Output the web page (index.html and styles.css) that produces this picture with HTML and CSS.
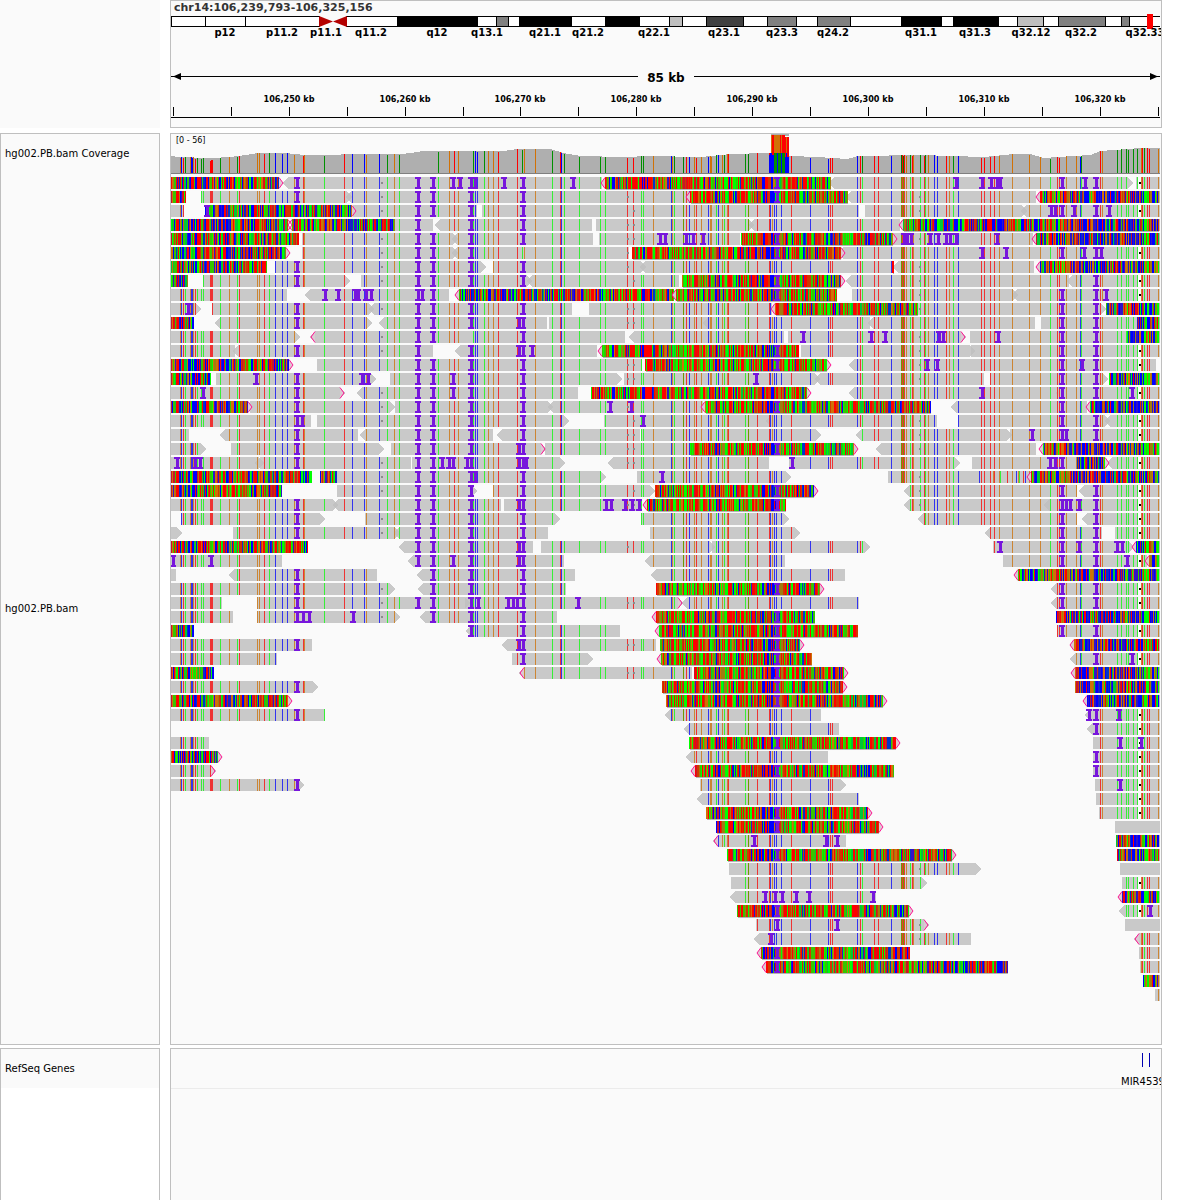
FILE: index.html
```html
<!DOCTYPE html>
<html lang="en">
<head>
<meta charset="utf-8">
<meta name="viewport" content="width=device-width, initial-scale=1">
<title>chr14:106,239,793-106,325,156</title>
<link rel="stylesheet" href="styles.css">
</head>
<body>
<main class="browser">
  <section class="row row-header">
    <div class="names names-blank"></div>
    <div class="panel panel-header">
      <h1 class="locus">chr14:106,239,793-106,325,156</h1>
      <svg id="ideogram" class="ideogram" role="img" aria-label="Chromosome 14 bands"></svg>
      <svg id="ruler" class="ruler" role="img" aria-label="Ruler, 85 kb"></svg>
    </div>
  </section>
  <section class="row row-alignments">
    <div class="names">
      <div class="name name-coverage">hg002.PB.bam Coverage</div>
      <div class="name name-reads">hg002.PB.bam</div>
    </div>
    <div class="panel">
      <div class="coverage">
        <span class="range">[0 - 56]</span>
        <svg id="coverage" class="track" viewBox="171 134 990 40" preserveAspectRatio="none" shape-rendering="crispEdges"></svg>
      </div>
      <svg id="reads" class="track reads" viewBox="171 174 990 870" preserveAspectRatio="none" shape-rendering="crispEdges"></svg>
    </div>
  </section>
  <section class="row row-genes">
    <div class="names names-genes">
      <div class="name name-genes">RefSeq Genes</div>
    </div>
    <div class="panel">
      <svg id="genes" class="genes" role="img" aria-label="RefSeq genes"></svg>
    </div>
  </section>
</main>
<script src="tracks.js"></script>
</body>
</html>
```
FILE: styles.css
```css
* { box-sizing: border-box; }

body {
  margin: 0;
  background: #fff;
  color: #000;
  font-family: "DejaVu Sans", sans-serif;
  font-size: 10px;
  line-height: 12px;
}

.browser {
  display: flex;
  flex-direction: column;
  min-height: 100vh;
  padding-right: 18px;
}

.row {
  display: grid;
  grid-template-columns: 160px minmax(0, 1fr);
  column-gap: 10px;
}
.row-header { margin-bottom: 5px; }
.row-alignments { margin-bottom: 3px; }
.row-genes { flex: 1; }

.names {
  display: flex;
  flex-direction: column;
  border: 1px solid #bfbfbf;
  background: #fafafa;
}
.names-blank { border: 0; }
.names-genes { background: #fff; border-bottom: 0; }

.name {
  display: flex;
  align-items: center;
  padding-left: 4px;
}
.name-coverage { height: 40px; }
.name-reads { flex: 1; }
.name-genes { height: 39px; background: #fafafa; }

.panel {
  min-width: 0;
  overflow: hidden;
  border: 1px solid #bfbfbf;
  background: #fafafa;
}
.row-genes .panel { border-bottom: 0; }

.locus {
  height: 13px;
  margin: 0;
  padding-left: 3px;
  color: #333;
  font-size: 11px;
  font-weight: bold;
  line-height: 14px;
}

.ideogram, .ruler, .genes, .track { display: block; width: 100%; }
.ideogram { height: 46px; }
.ruler { height: 67px; }
.genes { height: 60px; }
.reads { height: 870px; }

.coverage { position: relative; height: 40px; }
.coverage .track { height: 40px; }
.range {
  position: absolute;
  top: 1px;
  left: 5px;
  font-size: 8px;
}

.band-label { font-size: 10px; font-weight: bold; text-anchor: middle; }
.span-label { font-size: 12px; font-weight: bold; text-anchor: middle; }
.tick-label {
  font-family: "DejaVu Sans Condensed", "DejaVu Sans", sans-serif;
  font-size: 9px;
  font-weight: bold;
  text-anchor: middle;
}
.gene-label { font-size: 10px; }
```
FILE: tracks.js
```js
var X0 = 171, W = 990;
function el(id) { return document.getElementById(id); }
function pct(x) { return ((x - X0) / W * 100) + '%'; }
function wpct(w) { return (w / W * 100) + '%'; }
function rect(x, y, w, h, c) {
  return '<rect x="' + pct(x) + '" y="' + y + '" width="' + wpct(w) + '" height="' + h +
    '" fill="' + c + '" shape-rendering="crispEdges"/>';
}
function label(x, y, cls, t) {
  return '<text class="' + cls + '" x="' + pct(x) + '" y="' + y + '">' + t + '</text>';
}
/* A small drawing that keeps its shape, hung on a percentage position. */
function glyph(x, d, c) {
  return '<svg x="' + pct(x) + '" y="0" overflow="visible"><path d="' + d + '" fill="' + c + '"/></svg>';
}

/* Chromosome bands: start, end, fill */
(function () {
  var y = 2, s = '';
  s += rect(171, y, 149, 11, '#000') + rect(346, y, 814, 11, '#000');
  s += rect(172, y + 1, 33, 9, '#fff') + rect(206, y + 1, 39, 9, '#fff') + rect(246, y + 1, 73, 9, '#fff');
  s += rect(347, y + 1, 813, 9, '#fff');
  [[397, 478, '#000'], [496, 509, '#808080'], [519, 572, '#000'], [605, 640, '#000'], [669, 683, '#bfbfbf'],
   [706, 744, '#404040'], [767, 797, '#808080'], [817, 851, '#808080'], [901, 942, '#000'], [953, 999, '#000'],
   [1017, 1044, '#bfbfbf'], [1058, 1106, '#808080'], [1121, 1130, '#808080']].forEach(function (b) {
    s += rect(b[0], y, b[1] - b[0], 11, '#000') + rect(b[0] + 1, y + 1, b[1] - b[0] - 2, 9, b[2]);
  });
  s += glyph(319, 'M0 2L14 7.5L0 13Z', '#b40000') + glyph(333, 'M0 7.5L14 2V13Z', '#b40000');
  s += rect(1147, 0, 6, 15, '#f00');
  [[225, 'p12'], [282, 'p11.2'], [326, 'p11.1'], [371, 'q11.2'], [437, 'q12'], [487, 'q13.1'], [545, 'q21.1'],
   [588, 'q21.2'], [654, 'q22.1'], [724, 'q23.1'], [782, 'q23.3'], [833, 'q24.2'], [921, 'q31.1'], [975, 'q31.3'],
   [1031, 'q32.12'], [1081, 'q32.2'], [1145, 'q32.33']].forEach(function (l) {
    s += label(l[0], 22, 'band-label', l[1]);
  });
  el('ideogram').innerHTML = s;
})();

/* Ruler */
(function () {
  var s = rect(171, 16, 467, 1, '#000') + rect(694, 16, 466, 1, '#000');
  s += glyph(173, 'M0 16.5L8 13V20Z', '#000') + glyph(1150, 'M8 16.5L0 13V20Z', '#000');
  s += label(666, 22, 'span-label', '85 kb');
  [173, 231, 289, 347, 405, 463, 520, 578, 636, 694, 752, 810, 868, 926, 984, 1042, 1100, 1158].forEach(function (x) {
    s += rect(x, 47, 1, 9, '#000');
  });
  for (var i = 0; i < 8; i++) {
    s += label([289, 405, 520, 636, 752, 868, 984, 1100][i], 42, 'tick-label', '106,' + (250 + i * 10) + ' kb');
  }
  s += rect(171, 57, 989, 1, '#000');
  el('ruler').innerHTML = s;
})();

/* Mismatch columns shared by the reads */
var SNP = {
  o: [180, 190, 193, 229, 257, 259, 294, 304, 366, 394, 449, 458, 488, 493, 524, 535, 653, 672, 694, 701, 710, 711, 722,
      727, 772, 906, 913, 928, 949, 999, 1012, 1029, 1040, 1066, 1076, 1102, 1141, 1158],
  b: [181, 191, 192, 275, 282, 287, 352, 364, 379, 475, 477, 561, 671, 689, 708, 718, 770, 774, 776, 781, 810, 828,
      857, 891, 934, 937, 958, 1080],
  r: [183, 195, 210, 211, 212, 239, 264, 303, 344, 454, 498, 517, 560, 627, 633, 686, 696, 728, 757, 769, 791, 830, 832,
      860, 874, 878, 902, 904, 912, 924, 946, 981, 984, 990, 994, 1057, 1059, 1100, 1142, 1147, 1149],
  g: [185, 197, 201, 203, 220, 237, 269, 324, 387, 399, 438, 473, 484, 522, 552, 564, 579, 600, 605, 641, 643, 674, 716,
      724, 745, 862, 910, 920, 925, 953, 1050, 1081, 1117, 1121, 1126, 1128, 1133, 1137, 1144],
  d: [683, 748, 901, 903]
};
var READ_COLOR = { o: '#cc8533', b: '#3333ef', r: '#ee3333', g: '#37ef37', d: '#6f9a00' };
var COV_COLOR = { o: '#d17105', b: '#0000ff', r: '#ff0000', g: '#009000', d: '#008000' };

var seed = 7;
function rnd() {
  seed = (seed * 1103515245 + 12345) % 2147483648;
  return ((seed >> 8) % 10007) / 10007;
}
function P(x, y, w, h) { return 'M' + x + ' ' + y + 'h' + w + 'v' + h + 'h-' + w + 'z'; }
function Layer() { this.m = {}; }
Layer.prototype.add = function (c, d) { this.m[c] = (this.m[c] || '') + d; };
Layer.prototype.svg = function () {
  var s = '';
  for (var c in this.m) { s += '<path fill="' + c + '" d="' + this.m[c] + '"/>'; }
  return s;
};

/* Coverage */
(function () {
  var prof = [[171, 156], [178, 157], [210, 158], [230, 157], [245, 155], [257, 153], [285, 153], [305, 155], [375, 154],
    [400, 154], [410, 153], [423, 151], [503, 151], [517, 149], [550, 149], [563, 153], [580, 156], [623, 157],
    [650, 156], [700, 157], [730, 154], [767, 153], [790, 156], [817, 157], [847, 159], [857, 156], [920, 155],
    [983, 157], [1013, 154], [1030, 154], [1043, 158], [1057, 157], [1090, 155], [1100, 151], [1127, 149], [1140, 148], [1160, 148]];
  function top(x) {
    for (var i = 1; i < prof.length; i++) {
      if (x <= prof[i][0]) {
        var a = prof[i - 1], b = prof[i];
        return Math.round(a[1] + (b[1] - a[1]) * (x - a[0]) / (b[0] - a[0]));
      }
    }
    return 148;
  }
  var L = new Layer(), x, y;
  for (x = 171; x < 1160; x++) {
    y = top(x);
    L.add('#afafaf', P(x, y, 1, 173 - y));
  }
  for (var k in SNP) {
    SNP[k].forEach(function (p) {
      var t = top(p) + (p > 209 && p < 213 ? 2 : 0) + (p % 3 === 0 ? 1 : 0);
      L.add(COV_COLOR[k], P(p, t, 1, 173 - t));
    });
  }
  for (x = 771; x < 789; x++) {
    L.add('#afafaf', P(x, 134, 1, 2));
    L.add(x % 5 === 1 || (x > 773 && x < 780) ? '#d17106' : '#ff0001', P(x, x > 784 ? 137 : 135, 1, 20));
    L.add(x < 773 || x % 4 === 1 || x > 785 ? '#0001ff' : '#009001', P(x, 153, 1, 20));
  }
  L.add('#0001ff', P(769, 155, 2, 18));
  L.add('#7f7f7f', P(171, 173, 989, 1));
  el('coverage').innerHTML = L.svg();
})();

/* Reads. g: aligned, b: aligned without mismatches, m: mismatched bases.
   < and > mark strand ends, { and } mark clipped ends.
   Second and third fields: extra and missing insertions. */
var ROWS = [
  ['m171-279> g<283-602 m<605-831 g<829-1133> g1136-1160', [453, 460, 475, 504, 573, 956, 982, 991, 997, 1000, 1085]],
  ['m171-186 g201-352> g<346-690 m<690-848 g<846-1036 m<1040-1160', [], [1062, 1096]],
  ['g171-184 m205-352> g<348-477 g482-718 g<710-859 g865-1027> g<1021-1160', [207, 1051, 1055, 1074, 1109]],
  ['m171-288> m<292-395 g395-433 g<435-592 g596-754> g<749-900 m<903-1160', []],
  ['m171-299 g302-458> g<452-593 g599-740 m741-893> g893-1033 m<1036-1160', [660, 665, 686, 693, 703, 904, 907, 911, 930, 938, 946, 950, 956, 997]],
  ['m171-286> g302-458> g<452-629 m632-841> g<838-1160', [982, 1006, 1084, 1101], [523]],
  ['m171-267 g275-486> g493-646> g<640-892 m892-894 g<893-1034 m<1040-1160', []],
  ['m171-188 g203-350> g361-532> g<527-679 m682-841> g<846-1069 g<1067-1160', [], [1062]],
  ['g171-287 g<305-449 m<459-674 m<676-837 g852-1018> g<1012-1160', [325, 338, 355, 358, 366, 371, 422, 1106], [471]],
  ['g171-201> g212-374> g<369-572 g589-772 m<775-918 g918-1106> m1106-1160', [188]],
  ['m171-194 g<215-372> g<379-547 g549-710 g<703-870 g<868-1035 g1041-1137 m1137-1160', [519]],
  ['g171-300> g{310-625 g<629-784 g788-966} g970-1127 m1127-1160', [803, 871, 885, 939, 943, 998], [297, 471]],
  ['g171-235 g<233-433 g<455-597 m<602-799 g801-975> g971-1160', [519, 532], [433]],
  ['m171-289> g317-642 m645-827> g<849-1156', [927, 937, 1082]],
  ['m171-211 g216-376> g390-622> g624-820> g<815-984 g990-1108> m1109-1160', [256, 362, 368, 453, 756]],
  ['g171-345} g<357-578 m591-807> g<849-1060 g<1056-1160', [203, 453, 982, 1132]],
  ['m171-248> g250-395> g395-553> g<548-703 m<705-931 g<951-1087 m<1090-1160', [610, 631]],
  ['g171-311 g317-569> g604-775 g<766-937 g958-1110> g<1105-1160', [302, 643]],
  ['g171-189 g<220-358 g<360-493 g<497-640 g641-821> g<856-1012> g1010-1160', [1032, 1066]],
  ['g171-206> g231-384> g391-546} g545-690 m690-854> g<876-1036 m<1043-1160', [519]],
  ['g171-264> g<255-411 g412-565> g<608-769 g789-960> g972-1077 m1077-1105> g<1107-1160', [177, 195, 200, 442, 449, 453, 467, 519, 526, 792, 1050, 1055]],
  ['m171-312 m320-337 g337-606> g637-791> g888-1030 m<1031-1160', [662, 475]],
  ['m171-282 g337-477> g493-655> m655-814> g<904-1077 g<1079-1160', []],
  ['g171-338> g<333-501 g504-642 m<647-786 g<904-1050 g<1044-1160', [519, 606, 611, 625, 632, 639, 1066, 1070, 1079]],
  ['g181-325> g365-560> g641-789> g<918-1077 g<1082-1160', []],
  ['g171-182> g233-400> g<394-548 g650-800> g<985-1102 g1115-1160', []],
  ['m171-308 g<399-533 g541-715> g712-870> g993-1134> m<1136-1160', [519, 1000, 1079, 1117, 1122]],
  ['g171-282 g<408-564 g<645-785 g1003-1147 m<1149-1160', [173, 211, 453, 519, 1127]],
  ['g171-176 g<229-377 g<417-575 g<651-845 m<1018-1160', [], [418]],
  ['g171-395> g<418-566 m656-820> g<1051-1160', [], [418]],
  ['g171-222 g257-470> g465-683} g<682-859 g<1051-1160', [478, 508, 513, 517, 578]],
  ['g171-233 g257-400> g<420-557 m<656-815 m1056-1160', [303, 309, 353], [418]],
  ['m171-194 g<466-620 m<659-858 g1057-1160', []],
  ['g171-312 g<502-656 m660-800> m<1074-1160', [519]],
  ['g171-277 g512-593> m<661-812 g<1070-1160', [1132]],
  ['m171-214 g{519-692 m694-844> m<1075-1160', [], [523]],
  ['g171-318> m662-843> m1075-1160', []],
  ['m171-288> m666-883> m<1087-1160', []],
  ['g171-325 g<665-821 g<1085-1160', [1089, 1119]],
  ['g<684-839 g<1087-1160', []],
  ['g171-209 m689-896> g1093-1160', [1120, 1141], [1096]],
  ['m171-218> g<686-828 g1093-1160', []],
  ['g171-216} m<695-894 g1093-1160', []],
  ['g171-304> g700-846> g1095-1160', [1120], [1096]],
  ['g<697-859 g1096-1160', [], [1096]],
  ['m706-868> g1099-1160', []],
  ['m716-879> b1115-1160', []],
  ['g{713-846 m1116-1160', [754, 826, 837]],
  ['m727-952> m1117-1160', []],
  ['g729-981> b1120-1160', []],
  ['g731-927> g1122-1160', []],
  ['g<730-876 m<1122-1160', [765, 775, 782, 796, 809, 873]],
  ['m737-909> g<1119-1160', [1150]],
  ['g756-929} b1125-1160', [777, 837]],
  ['g<754-971 g{1134-1160', [771]],
  ['m<761-910 g1139-1160', []],
  ['m<766-1008 g1140-1160', []],
  ['m1143-1160', []],
  ['g1155-1160', []]
];
var INS = [297, 418, 433, 471, 523, 1062, 1096];
var DOTS = [382, 628, 634, 920];

/* Base colours and the blends of neighbouring bases */
var BASE = ['#ff0000', '#00ff00', '#0000ff', '#d17105', '#d13800', '#37c400', '#3214c8', '#a07c10', '#c8142d', '#00c837', '#0037c8', '#e01800'];
function pick(x) {
  var r = rnd(), w;
  if (x > 765 && x < 773) { w = [0, 0, 0.6, 0, 0.1, 0.1, 0.1, 0, 0.1, 0, 0, 0]; }
  else if (x > 600 && x < 910) { w = [0.2, 0.17, 0.06, 0.06, 0.13, 0.13, 0.03, 0.08, 0.03, 0.05, 0.03, 0.03]; }
  else if (x > 1000) { w = [0.12, 0.08, 0.18, 0.15, 0.08, 0.06, 0.12, 0.07, 0.05, 0.04, 0.03, 0.02]; }
  else { w = [0.16, 0.12, 0.14, 0.07, 0.08, 0.08, 0.11, 0.06, 0.06, 0.06, 0.04, 0.02]; }
  for (var i = 0; i < w.length; i++) { r -= w[i]; if (r < 0) { return BASE[i]; } }
  return BASE[0];
}
(function () {
  var col = {}, x;
  for (x = 171; x < 1160; x++) { col[x] = rnd() < 0.3 && col[x - 1] ? col[x - 1] : pick(x); }
  var grey = '', snp = new Layer(), bases = new Layer(), ins = '', dots = '', pink = '', gap = '', bar = '';
  function mark(c, y) {
    ins += P(c - 3, y, 6, 2) + P(c - 1, y + 2, 3, 8) + P(c - 3, y + 10, 6, 2);
  }
  function pinkRight(e, y) { pink += 'M' + e + ' ' + (y + 0.5) + 'l4 5.5l-4 5.5'; }
  function pinkLeft(a, y) { pink += 'M' + a + ' ' + (y + 0.5) + 'l-4 5.5l4 5.5'; }
  ROWS.forEach(function (row, i) {
    var y = 177 + 14 * i, greys = [];
    row[0].split(' ').forEach(function (tok) {
      var q = /^([gbm])([<{]?)(\d+)-(\d+)([>}]?)$/.exec(tok);
      var kind = q[1], a = +q[3], e = +q[4], l = q[2], r = q[5];
      if (kind === 'm') {
        if (e === 1160) { e = 1159; bar += P(1159, y, 1, 12); }
        for (var x = a; x < e; x++) {
          bases.add(rnd() < 0.55 ? col[x] : pick(x), P(x, y, 1, 12));
        }
        if (l) { pinkLeft(a, y); }
        if (r) { pinkRight(e, y); }
        if (a > 600 && a < 950) {
          bar += P(a + 1, y + 12, e - a - 1, 1);
          if (a < 770 && e > 785) { mark(777, y); }
        }
        return;
      }
      grey += '<path d="M' + (l ? a + 5 : a) + ' ' + y + (l ? 'L' + a + ' ' + (y + 6) + 'L' + (a + 5) + ' ' + (y + 12) : 'V' + (y + 12)) +
        'H' + (r ? e - 5 : e) + (r ? 'L' + e + ' ' + (y + 6) + 'L' + (e - 5) + ' ' + y : 'V' + y) + 'Z"/>';
      if (l === '{') { pinkLeft(a + 5, y); }
      if (r === '}') { pinkRight(e - 5, y); }
      if (kind === 'b') { return; }
      var s = l ? a + 5 : a, t = r ? e - 5 : e;
      greys.push([s, t]);
      for (var k in SNP) {
        SNP[k].forEach(function (p) { if (p >= s && p < t) { snp.add(READ_COLOR[k], P(p, y, 1, 12)); } });
      }
      DOTS.forEach(function (p) { if (p >= s && p < t && (i + p) % 5) { dots += P(p - 1, y + 5, 2, 2); } });
      if (s < 1137 && t > 1142) { gap += P(1138, y, 3, 12); snp.add('#010101', P(1139, y + 5, 2, 2)); }
    });
    INS.forEach(function (p) {
      if ((row[2] || []).indexOf(p) >= 0) { return; }
      if (greys.some(function (g) { return p >= g[0] && p < g[1]; })) { mark(p, y); }
    });
    row[1].forEach(function (p) { mark(p, y); });
    if (i === 21) {
      [979, 993, 1000, 1007, 1016, 1018, 1019, 1023, 1025].forEach(function (p, n) {
        snp.add(['#3333ef', '#cc8533', '#37ef37', '#ee3333'][n % 4], P(p, y, 1, 12));
      });
    }
  });
  el('reads').innerHTML =
    '<g fill="#c0c0c0" fill-opacity="0.85">' + grey + '</g>' +
    '<path fill="#b4b4b4" d="' + bar + '"/>' +
    '<path fill="#fafafa" d="' + gap + '"/>' +
    snp.svg() + bases.svg() +
    '<path fill="#8c8c8c" d="' + dots + '"/>' +
    '<path fill="#dcc8d2" stroke="#ff1493" shape-rendering="auto" d="' + pink + '"/>' +
    '<path fill="#7716dc" d="' + ins + '"/>';
})();

/* Genes */
el('genes').innerHTML = rect(1142, 4, 1, 14, '#0000b2') + rect(1149, 4, 1, 14, '#0000b2') +
  rect(171, 39, 989, 1, '#ebebeb') + label(1121, 36, 'gene-label', 'MIR4539');
```
